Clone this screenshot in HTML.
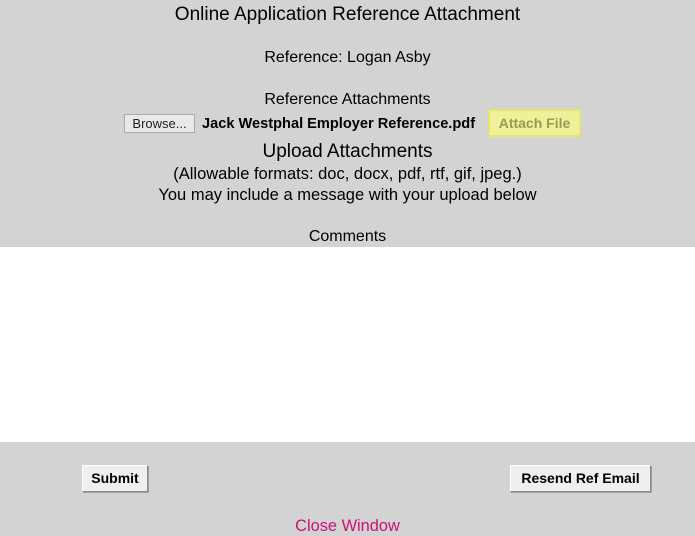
<!DOCTYPE html>
<html><head><style>
body{margin:0;width:695px;height:534px;background:#d3d3d3;font-family:"Liberation Sans",sans-serif;color:#000;position:relative;overflow:hidden}
.c{position:absolute;left:0;width:695px;text-align:center;white-space:nowrap}
.btn{position:absolute;background:#efefef;border:1px solid #fff;border-right-color:#8a8a8a;border-bottom-color:#8a8a8a;box-shadow:1px 1px 0 #a0a0a0;font-weight:bold;font-size:14px;text-align:center;box-sizing:border-box}
</style></head><body>
<div class="c" style="top:4px;font-size:19px">Online Application Reference Attachment</div>
<div class="c" style="top:49px;font-size:16px">Reference: Logan Asby</div>
<div class="c" style="top:91px;font-size:16px">Reference Attachments</div>
<div style="position:absolute;left:124px;top:114px;width:71px;height:19px;background:#e9e9e9;border:1px solid #aaa;box-sizing:border-box;font-size:13px;line-height:17px;text-align:center;color:#222">Browse...</div>
<div style="position:absolute;left:202px;top:116px;font-size:14.6px;font-weight:bold">Jack Westphal Employer Reference.pdf</div>
<div style="position:absolute;left:488px;top:109px;width:93px;height:28px;background:#f0f09a;border:2px solid #e6e66a;box-sizing:border-box;font-size:14px;font-weight:bold;color:#9a9a55;line-height:24px;text-align:center">Attach File</div>
<div class="c" style="top:141px;font-size:19px">Upload Attachments</div>
<div class="c" style="top:165px;font-size:16.5px">(Allowable formats: doc, docx, pdf, rtf, gif, jpeg.)</div>
<div class="c" style="top:186px;font-size:16.5px">You may include a message with your upload below</div>
<div class="c" style="top:228px;font-size:16px">Comments</div>
<div style="position:absolute;left:0;top:247px;width:695px;height:195px;background:#fff"></div>
<div class="btn" style="left:82px;top:465px;width:66px;height:27px;line-height:25px">Submit</div>
<div class="btn" style="left:510px;top:465px;width:141px;height:27px;line-height:25px">Resend Ref Email</div>
<div class="c" style="top:517px;font-size:16.4px;color:#cc1177">Close Window</div>
</body></html>
